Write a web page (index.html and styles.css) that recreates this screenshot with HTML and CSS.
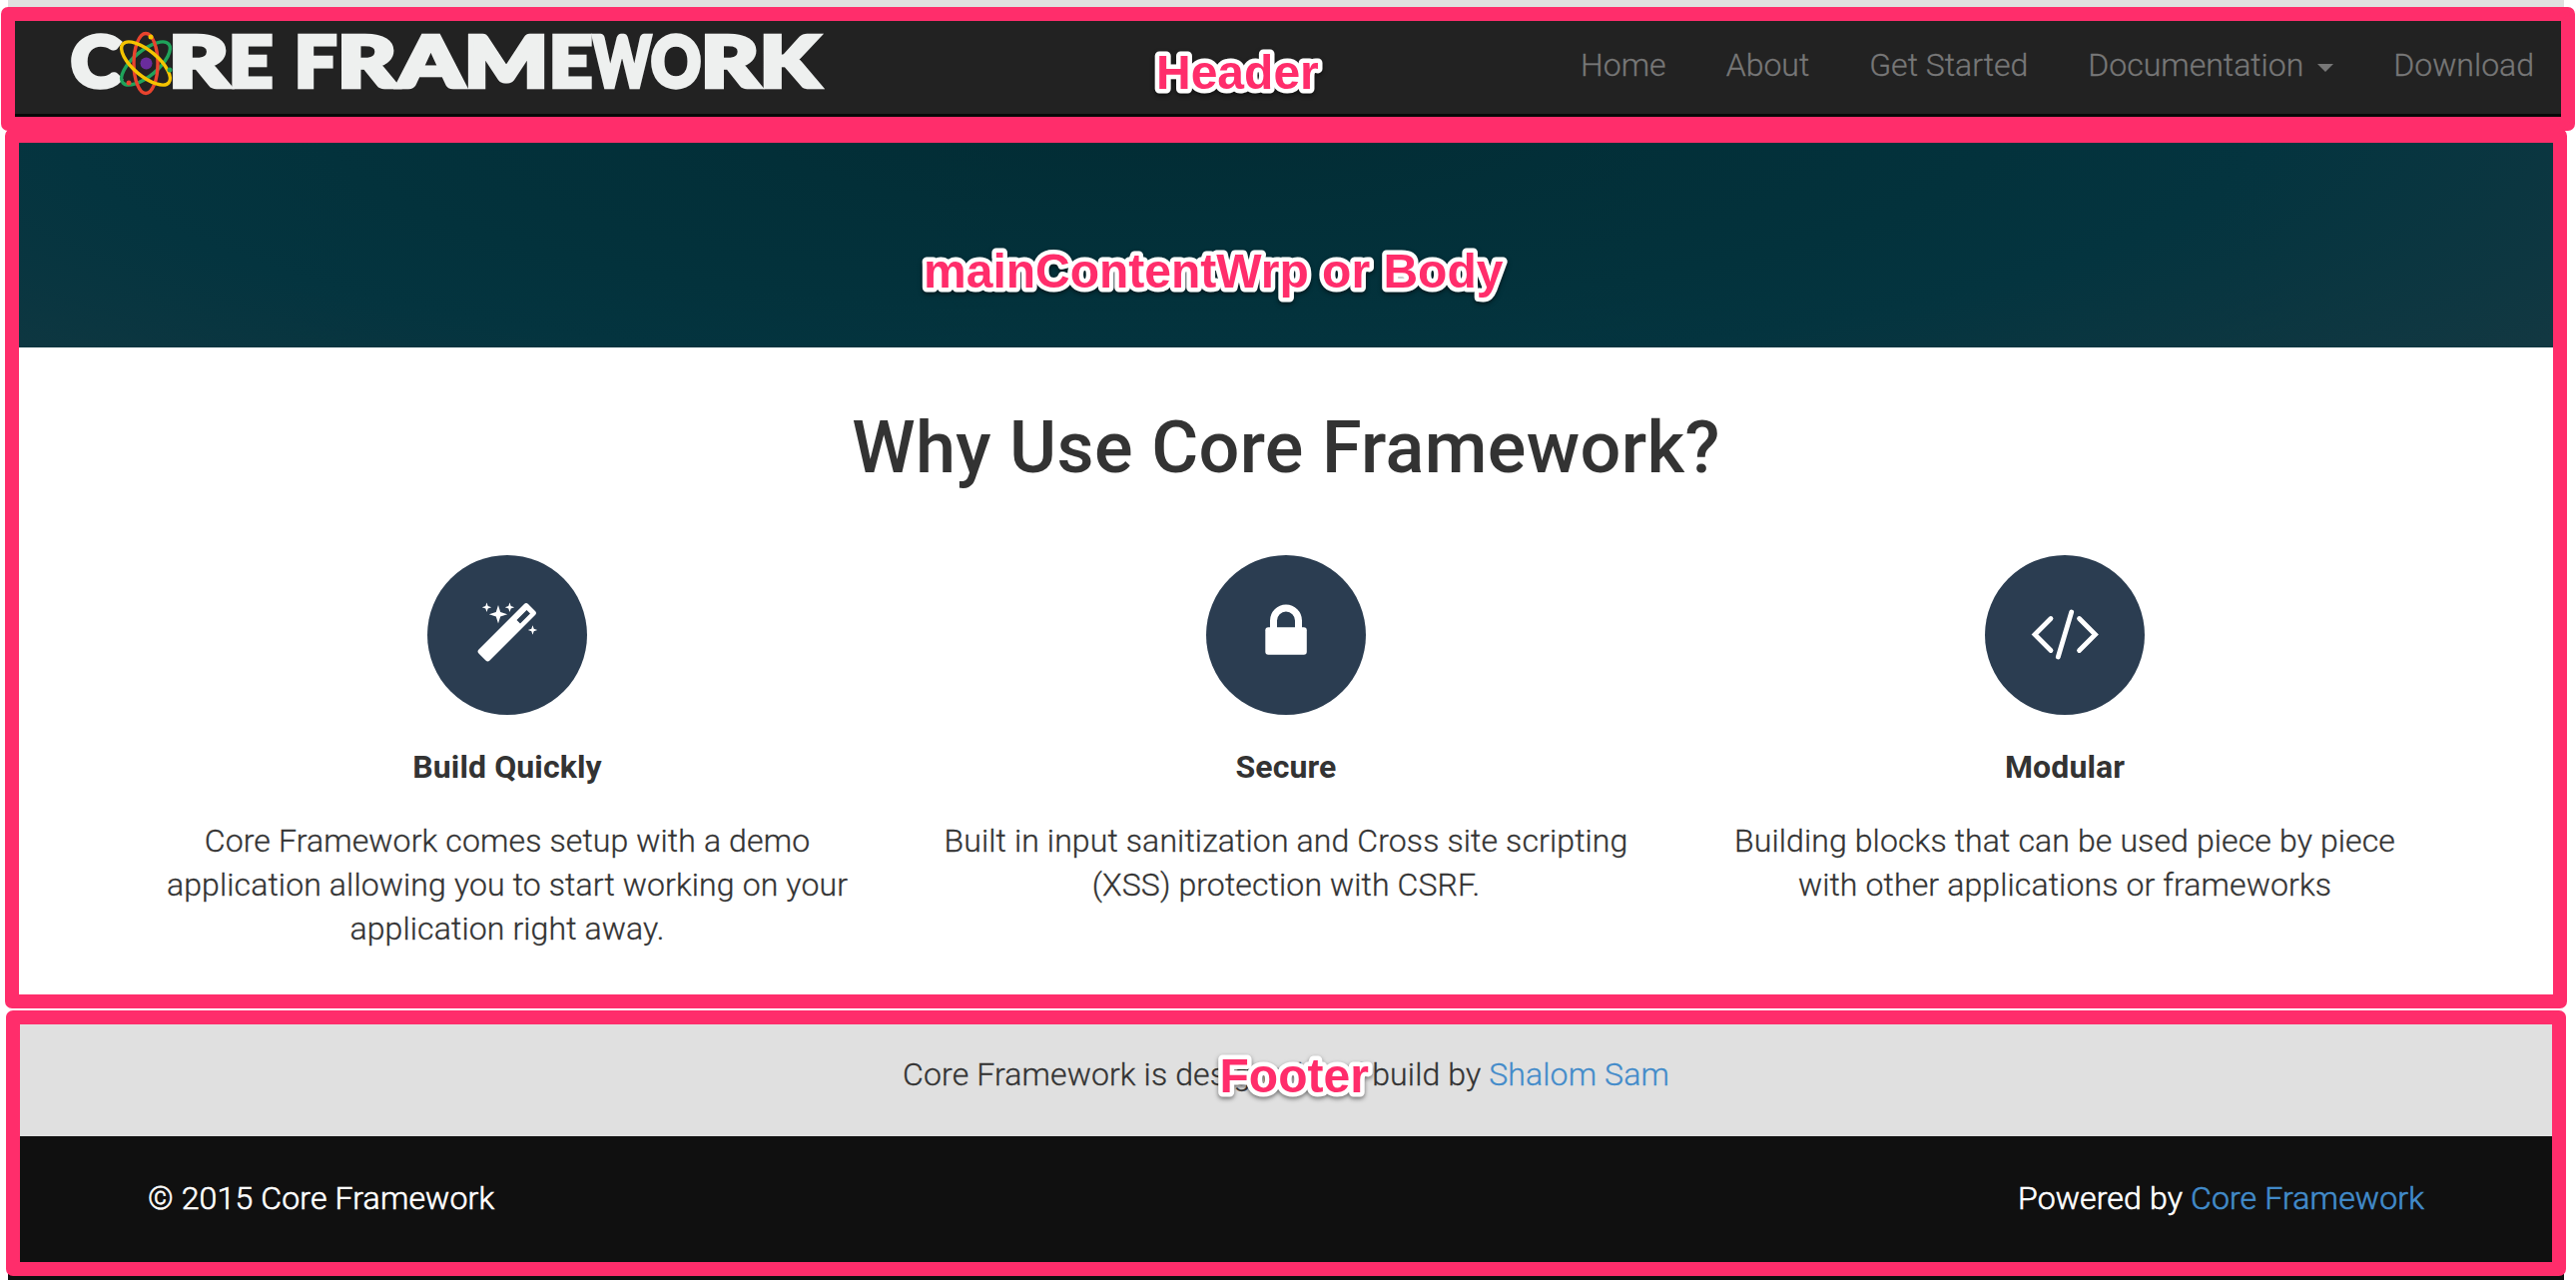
FILE: index.html
```html
<!DOCTYPE html>
<html lang="en">
<head>
<meta charset="utf-8">
<title>Core Framework</title>
<link rel="stylesheet" href="styles.css">
</head>
<body>
<div class="page">
  <header class="navbar">
    <a class="brand">
      <svg class="logo" width="780" height="94" viewBox="58 14 780 94">
        <text class="logo-text" y="86.500"><tspan x="71" textLength="50" lengthAdjust="spacingAndGlyphs">C</tspan><tspan x="169" textLength="60" lengthAdjust="spacingAndGlyphs">R</tspan><tspan x="229" textLength="44" lengthAdjust="spacingAndGlyphs">E</tspan> <tspan x="295" textLength="42" lengthAdjust="spacingAndGlyphs">F</tspan><tspan x="338" textLength="59" lengthAdjust="spacingAndGlyphs">R</tspan><tspan x="399" textLength="65" lengthAdjust="spacingAndGlyphs">A</tspan><tspan x="465" textLength="84" lengthAdjust="spacingAndGlyphs">M</tspan><tspan x="550" textLength="43" lengthAdjust="spacingAndGlyphs">E</tspan><tspan x="594" textLength="58" lengthAdjust="spacingAndGlyphs">W</tspan><tspan x="652" textLength="50" lengthAdjust="spacingAndGlyphs">O</tspan><tspan x="702" textLength="58" lengthAdjust="spacingAndGlyphs">R</tspan><tspan x="761" textLength="59" lengthAdjust="spacingAndGlyphs">K</tspan></text>
        <g fill="none" stroke-width="3.400">
          <ellipse cx="146" cy="63.500" rx="12.500" ry="30" transform="rotate(50 146 63.500)" stroke="#1fa35a"/>
          <ellipse cx="146" cy="63.500" rx="12" ry="30" stroke="#e8432e"/>
          <ellipse cx="146" cy="63.500" rx="12.500" ry="30" transform="rotate(-50 146 63.500)" stroke="#f5c400"/>
        </g>
        <circle cx="146.500" cy="63.500" r="6" fill="#6a2c9c"/>
        <circle cx="151" cy="37" r="2.500" fill="#f5c400"/>
        <circle cx="129" cy="83" r="2.500" fill="#e8432e"/>
        <circle cx="170" cy="70" r="2.500" fill="#1fa35a"/>
      </svg>
    </a>
    <nav class="menu">
      <a>Home</a><a>About</a><a>Get Started</a><a>Documentation<i class="caret"></i></a><a>Download</a>
    </nav>
  </header>
  <div class="banner"></div>
  <main class="why">
    <h1>Why Use Core Framework?</h1>
    <div class="features">
      <section class="feature">
        <svg class="icon" viewBox="0 0 160 160">
          <g fill="#fff">
            <path fill-rule="evenodd" d="M51.500 94.500L97 49q2-2 4 0l7 7q2 2 0 4l-45.500 45.500q-2 2-4 0l-7-7q-2-2 0-4zM89.500 65l3.500 3.500 10-10-3.500-3.500z"/>
            <path d="M71 50l2.200 7 7 2.200-7 2.200-2.200 7-2.200-7-7-2.200 7-2.200zM59.500 47.500l1.200 3.500 3.500 1.200-3.500 1.200-1.200 3.500-1.200-3.500-3.500-1.200 3.500-1.200zM82.500 47.500l1.200 3.500 3.500 1.200-3.500 1.200-1.200 3.500-1.200-3.500-3.500-1.200 3.500-1.200zM105.500 70.300l1.200 3.500 3.500 1.200-3.500 1.200-1.200 3.500-1.200-3.500-3.500-1.200 3.500-1.200z"/>
          </g>
        </svg>
        <h2>Build Quickly</h2>
        <p>Core Framework comes setup with a demo application allowing you to start working on your application right away.</p>
      </section>
      <section class="feature">
        <svg class="icon" viewBox="0 0 160 160">
          <path d="M67.500 76V65.500a12.500 12.500 0 0 1 25 0V76" fill="none" stroke="#fff" stroke-width="7"/>
          <rect x="59.300" y="72.300" width="41.500" height="27.500" rx="3" fill="#fff"/>
        </svg>
        <h2>Secure</h2>
        <p>Built in input sanitization and Cross site scripting (XSS) protection with CSRF.</p>
      </section>
      <section class="feature">
        <svg class="icon" viewBox="0 0 160 160">
          <path d="M66 63.500L50 79.500l16 16M94.500 63.500l16 16-16 16M86.700 57L73.300 102" fill="none" stroke="#fff" stroke-width="4.800" stroke-linecap="round"/>
        </svg>
        <h2>Modular</h2>
        <p>Building blocks that can be used piece by piece with other applications or frameworks</p>
      </section>
    </div>
  </main>
  <footer>
    <div class="credit"><span>Core Framework is designed and build by <a>Shalom Sam</a></span></div>
    <div class="legal"><span>© 2015 Core Framework</span><span>Powered by <a>Core Framework</a></span></div>
  </footer>
</div>
<div class="region region-header"></div>
<div class="region region-main"></div>
<div class="region region-footer"></div>
<svg class="labels" width="2580" height="1282">
  <text x="1158" y="89">Header</text>
  <text x="925" y="288">mainContentWrp or Body</text>
  <text x="1221.500" y="1094">Footer</text>
</svg>
</body>
</html>
```
FILE: styles.css
```css
* { box-sizing: border-box; }
body {
  margin: 0;
  position: relative;
  height: 1282px;
  overflow: hidden;
  background: #fff;
  color: #333;
  font: 300 32px/44px Roboto, "Liberation Sans", sans-serif;
}
.page {
  display: flex;
  flex-direction: column;
  width: 2560px;
  height: 1282px;
  margin-left: 8px;
  border-top: 14px solid #e0e0e0;
}
.navbar {
  display: flex;
  justify-content: space-between;
  height: 104px;
  background: #222;
  border-bottom: 4px solid #080808;
}
.brand { padding-left: 50px; }
.logo { display: block; }
.logo-text {
  font: 900 71px Lato, sans-serif;
  fill: #eef0ef;
  stroke: #eef0ef;
  stroke-width: 4.5px;
}
.menu { display: flex; padding-top: 29px; color: #777; -webkit-text-stroke: .3px; }
.menu a { padding: 0 30px; white-space: nowrap; }
.caret {
  display: inline-block;
  margin-left: 14px;
  vertical-align: 4px;
  border: 8px solid transparent;
  border-top-color: #777;
  border-bottom: 0;
}
.banner {
  height: 230px;
  background: radial-gradient(ellipse 1300px 300px at 45% 0, #022c34, #03323c 65%, #04343f 85%, #123842 130%);
}
.why { height: 670px; text-align: center; }
h1 { margin: 0; padding-top: 61px; font-size: 72px; font-weight: 500; line-height: 80px; letter-spacing: .35px; }
.features { display: flex; width: 2340px; margin: 67px auto 0; }
.feature { flex: 1; padding: 0 30px; }
.icon { display: block; width: 160px; height: 160px; margin: 0 auto; border-radius: 50%; background: #2b3d51; }
h2 { margin: 30px 0 0; font-size: 32px; font-weight: 700; line-height: 44px; letter-spacing: .1px; }
p { margin: 30px 0 0; letter-spacing: .12px; -webkit-text-stroke: .3px; }
footer { letter-spacing: .12px; -webkit-text-stroke: .3px; }
footer a { color: #428bca; }
.credit { height: 120px; padding-top: 36px; text-align: center; background: #e0e0e0; }
.legal {
  display: flex;
  justify-content: space-between;
  height: 144px;
  padding: 40px 140px 0;
  background: #101010;
  color: #fff;
  letter-spacing: .15px;
  -webkit-text-stroke: .6px;
}
.region { position: absolute; border: 14px solid #ff2d6b; border-radius: 7px; }
.region-header { left: 1px; top: 7px; width: 2578px; height: 124px; }
.region-main { left: 5px; top: 129px; width: 2566px; height: 881px; }
.region-footer { left: 6px; top: 1012px; width: 2564px; height: 266px; }
.labels { position: absolute; left: 0; top: 0; }
.labels text {
  font: 700 48px "Liberation Sans", Arial, sans-serif;
  fill: #ff2d6b;
  stroke: #fff;
  stroke-width: 9px;
  stroke-linejoin: round;
  paint-order: stroke;
  filter: drop-shadow(0 2px 2px rgba(0, 0, 0, .5));
}
```
